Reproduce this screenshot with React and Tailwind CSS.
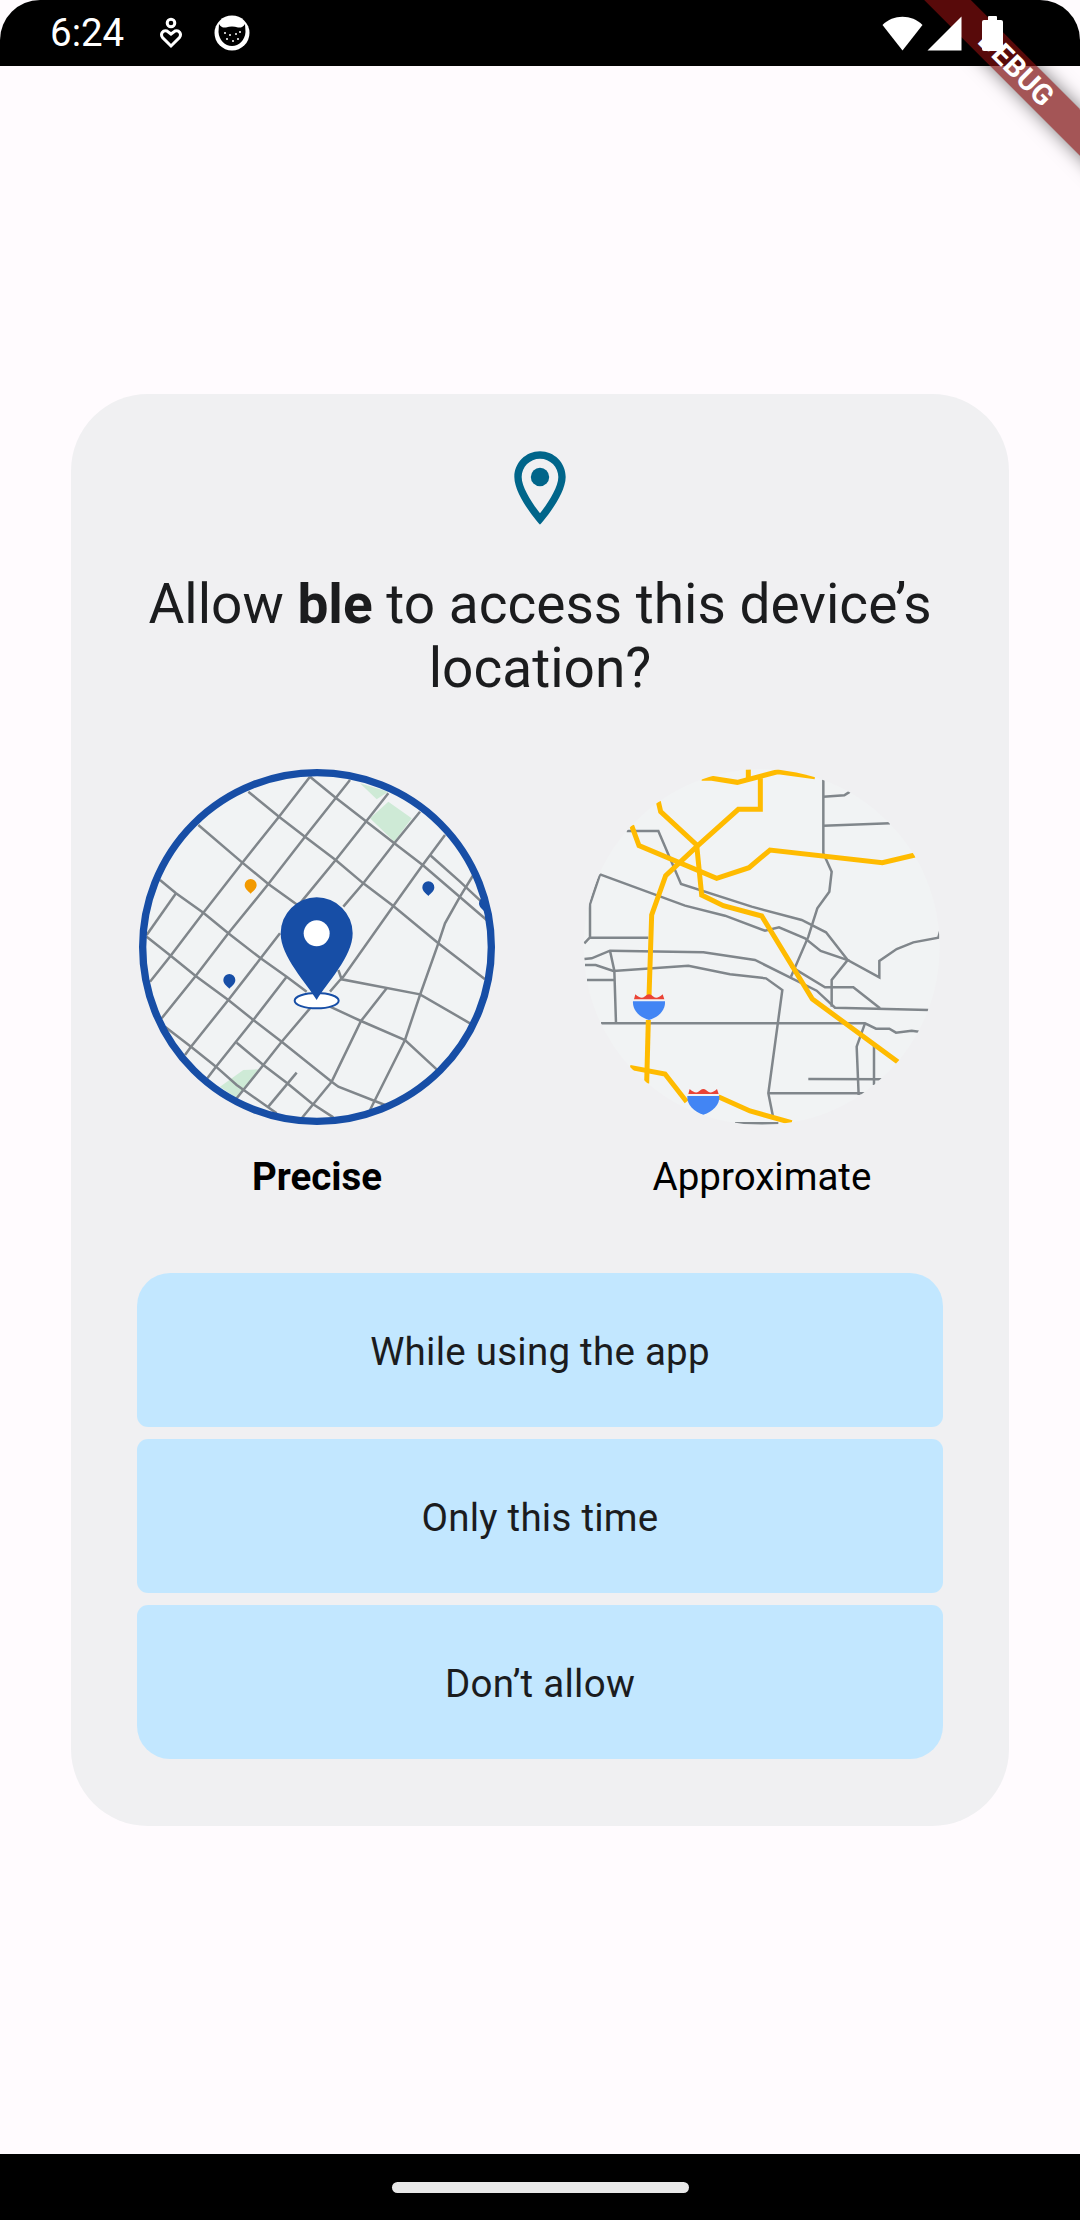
import React from "react";

function StatusBar() {
  return (
    <div className="flex h-[66px] shrink-0 items-center justify-between rounded-t-[40px] bg-black pl-[50px] pr-[77px] text-white">
      <div className="flex items-center">
        <span className="text-[38.5px] leading-[38px]">6:24</span>
        <svg className="ml-[35px] -mt-[1px]" width="24" height="32" viewBox="0 0 24 32" fill="none" stroke="#fff" strokeWidth="3">
          <circle cx="12" cy="6" r="3.8" />
          <path d="M12 29 L3.5 20.5 C1 17 4 12.5 8 14 L12 17 L16 14 C20 12.5 23 17 20.5 20.5 Z" />
        </svg>
        <svg className="ml-[31px]" width="36" height="36" viewBox="0 0 36 36">
          <circle cx="18" cy="18" r="17.5" fill="#fff" />
          <path d="M4.5 17 C5 25 11 31 18 31 C25 31 31 25 31.5 17 L31 9 C29 12 27 13 24 12.5 C20 11 16 11 12 12.5 C9 13 7 12 5 9 Z" fill="#000" />
          <g fill="#fff">
            <circle cx="11" cy="18" r="1" /><circle cx="16" cy="20" r="1" /><circle cx="22" cy="19" r="1" /><circle cx="26" cy="17" r="1" />
            <circle cx="13" cy="24" r="1" /><circle cx="19" cy="26" r="1" /><circle cx="24" cy="24" r="1" />
          </g>
        </svg>
      </div>
      <div className="relative z-20 flex items-center">
        <svg width="41" height="35" viewBox="0 0 41 35">
          <path d="M0.5 9 C11 -2 30 -2 40.5 9 L20.5 34.5 Z" fill="#fff" />
        </svg>
        <svg className="ml-[4px]" width="35" height="35" viewBox="0 0 35 35">
          <path d="M34.5 0.5 V34.5 H0.5 Z" fill="#fff" />
        </svg>
        <div className="ml-[20px] flex flex-col items-center">
          <div className="h-[4px] w-[9px] rounded-t-[1px] bg-white" />
          <div className="h-[31px] w-[21px] rounded-[2px] bg-white" />
        </div>
      </div>
    </div>
  );
}

function DebugBanner() {
  return (
    <div className="pointer-events-none absolute left-0 top-0 z-10 h-[220px] w-[1080px] overflow-hidden">
      <div className="absolute left-[866px] top-[52px] flex h-[33px] w-[300px] rotate-45 items-center justify-center bg-[rgba(125,14,14,0.7)] shadow-[0_0_18px_rgba(0,0,0,0.5)]">
        <span className="text-[29px] font-bold leading-[29px] text-white">DEBUG</span>
      </div>
    </div>
  );
}

function PreciseMap() {
  const roads = [
    "M540,50 L447,170 L337,308 L220,458 L122,587 L60,665",
    "M660,60 L525,230 L415,372 L295,520 L197,648 L95,775",
    "M775,100 L617,300 L510,430 M450,520 L392,595 L295,720 L183,860 L165,885",
    "M870,155 L793,250 L700,370 L640,440",
    "M945,225 L878,315 L790,438 L640,650 L630,660 L600,695 M625,630 L635,658 L870,703 L1020,790",
    "M540,745 L455,845 L400,915 L320,1015",
    "M470,650 L370,780 L258,920 L232,955",
    "M138,400 L50,525",
    "M500,938 L415,1040",
    "M605,965 L515,1075",
    "M1030,345 L990,410 L945,490 L925,550 L870,705 L825,840 L720,1050",
    "M770,685 L693,783 L605,965",
    "M540,50 L617,113 L793,250 L878,315 L1070,480",
    "M355,95 L447,170 L525,230 L617,300 L700,370 L790,438 L925,550 L1065,658",
    "M205,195 L337,308 L415,372 L510,440",
    "M90,360 L138,400 L220,458 L295,520 L392,595 L470,650 L530,695",
    "M50,530 L122,587 L197,648 L295,720 L370,780 L455,845 L605,965 L625,980 L765,1035",
    "M105,800 L183,860 L258,920 L320,975 L440,1060",
    "M320,848 L400,915 L470,968 L545,1030 L610,1072",
    "M600,740 L693,783 L825,840 L920,928",
    "M900,285 L990,365 L1070,440",
  ];
  const pins = [
    [362, 375, "#F29900"],
    [895, 382, "#174EA6"],
    [298, 660, "#174EA6"],
    [1065, 430, "#174EA6"],
  ];
  return (
    <svg width="370" height="370" viewBox="0 0 1110 1110" className="-ml-[9px] -mr-[5px] -mt-[7px] -mb-[7px] shrink-0">
      <defs>
        <clipPath id="pm"><circle cx="561" cy="561" r="523" /></clipPath>
      </defs>
      <circle cx="561" cy="561" r="523" fill="#F1F3F4" />
      <g clipPath="url(#pm)">
        <path d="M690,70 L775,95 L740,118 Z M720,175 L775,125 L845,175 L793,245 Z M270,980 L340,930 L385,928 L320,1015 Z" fill="#CEEAD6" />
        <g fill="none" stroke="#80868B" strokeWidth="7.5">
          {roads.map((d, i) => <path key={i} d={d} />)}
        </g>
        {pins.map(([x, y, c], i) => (
          <path key={i} d={`M${x},${y + 26} C${x - 6},${y + 19} ${x - 18},${y + 12} ${x - 18},${y} A18,18 0 1 1 ${x + 18},${y} C${x + 18},${y + 12} ${x + 6},${y + 19} ${x},${y + 26} Z`} fill={c} />
        ))}
      </g>
      <circle cx="561" cy="561" r="523" fill="none" stroke="#174EA6" strokeWidth="22" />
      <ellipse cx="560" cy="722" rx="66" ry="23" fill="#fff" stroke="#174EA6" strokeWidth="6" />
      <path d="M560,720 C530,670 452,590 452,520 A108,108 0 1 1 668,520 C668,590 590,670 560,720 Z" fill="#174EA6" />
      <circle cx="560" cy="520" r="39" fill="#fff" />
    </svg>
  );
}

function Shield({ x, y }) {
  return (
    <g transform={`translate(${x - 222} ${y - 740})`}>
      <path d="M177,718 L181,703 C190,712 200,715 206,712 C212,708 216,703 222,703 C228,703 232,708 238,712 C244,715 254,712 263,703 L268,718 Z" fill="#EA4335" />
      <path d="M174,724 H270 C272,750 250,772 222,780 C194,772 172,750 174,724 Z" fill="#4285F4" />
    </g>
  );
}

function ApproximateMap() {
  const gray = [
    "M745,58 V280 L770,335 L763,395 L727,445 L700,530 L648,650",
    "M745,110 L808,106 L825,95",
    "M745,197 L945,190",
    "M155,213 H250 L318,372 L530,440 L680,480 L753,517 L818,600 L913,652 V603 L965,567 L1015,547 L1090,533 L1095,515",
    "M75,343 L330,437 L450,467 L570,512 L612,502 L690,535 L737,573 L818,600 L770,660 V740",
    "M75,343 L45,432 V532 L28,550 M45,533 H220",
    "M28,597 L50,595 L105,572 L385,577 L540,600 L725,692 L780,743 L1060,750",
    "M30,615 H62 L115,633 L340,617 L465,643 L573,655 L622,690 L580,1000 L595,1075",
    "M105,572 L118,632 L123,790",
    "M36,660 H118",
    "M78,790 H870 L903,806 H943 L963,818 L1010,812 L1032,815",
    "M870,790 L845,860 L851,1005",
    "M897,850 V975",
    "M700,957 L920,958",
    "M580,1000 H870",
    "M648,620 L750,682 H835 L915,745",
    "M480,1090 H610",
  ];
  const yellow = [
    "M380,55 L410,55 L487,67 L610,35 L720,50",
    "M520,28 V55",
    "M556,55 V148 H490 L365,260 L272,347 L230,465 L222,710",
    "M250,125 L257,155 L365,255 L380,405 L445,437 L560,468 L712,717 L970,907",
    "M170,197 L192,257 L425,355 L522,323 L585,270 L922,308 L1020,285",
    "M220,780 L215,970",
    "M165,922 L270,942 L335,1025",
    "M430,1010 L525,1053 L650,1088",
  ];
  return (
    <svg width="370" height="370" viewBox="0 0 1110 1110" className="-ml-[9px] -mr-[5px] -mt-[7px] -mb-[7px] shrink-0">
      <defs>
        <clipPath id="am"><circle cx="560" cy="561" r="534" /></clipPath>
      </defs>
      <circle cx="560" cy="561" r="534" fill="#F1F3F4" />
      <g clipPath="url(#am)">
        <g fill="none" stroke="#80868B" strokeWidth="7.5">
          {gray.map((d, i) => <path key={i} d={d} />)}
        </g>
        <g fill="none" stroke="#FFBB00" strokeWidth="15">
          {yellow.map((d, i) => <path key={i} d={d} />)}
        </g>
        <Shield x={222} y={740} />
        <Shield x={385} y={1024} />
      </g>
    </svg>
  );
}

function ActionButton({ children, shape }) {
  return (
    <button className={`flex h-[154px] w-full items-center justify-center bg-[#C2E7FF] pt-[3px] text-[38.5px] tracking-[0.25px] text-[#1b1c1e] ${shape}`}>
      {children}
    </button>
  );
}

export default function App() {
  return (
    <div className="relative flex h-[2220px] w-[1080px] flex-col overflow-hidden bg-[#FFFBFE] font-['Roboto',sans-serif]">
      <StatusBar />
      <DebugBanner />
      <main className="flex flex-1 items-center justify-center">
        <section className="flex w-[938px] flex-col items-center rounded-[77px] bg-[#F0F0F2] px-[66px] pb-[67px] pt-[50px]">
          <svg width="88" height="88" viewBox="0 0 24 24" fill="#00658A">
            <path d="M12 2C8.13 2 5 5.13 5 9c0 5.25 7 13 7 13s7-7.75 7-13c0-3.87-3.13-7-7-7zM7 9c0-2.76 2.24-5 5-5s5 2.24 5 5c0 2.88-2.88 7.19-5 9.88C9.92 16.21 7 11.85 7 9z" />
            <circle cx="12" cy="9" r="2.5" />
          </svg>
          <h1 className="mt-[40px] w-full text-center text-[55px] font-normal leading-[64px] text-[#1b1c1e]">
            Allow <b className="font-bold">ble</b> to access this device’s location?
          </h1>
          <div className="mt-[67px] flex w-full justify-between pl-[2px] pr-[3px]">
            <div className="flex w-[356px] flex-col items-center">
              <PreciseMap />
              <span className="mt-[31px] text-[38.5px] font-bold leading-[46px] text-black">Precise</span>
            </div>
            <div className="flex w-[356px] flex-col items-center">
              <ApproximateMap />
              <span className="mt-[31px] text-[38.5px] leading-[46px] text-black">Approximate</span>
            </div>
          </div>
          <div className="mt-[73px] flex w-full flex-col gap-[12px]">
            <ActionButton shape="rounded-t-[33px] rounded-b-[11px]">While using the app</ActionButton>
            <ActionButton shape="rounded-[11px]">Only this time</ActionButton>
            <ActionButton shape="rounded-t-[11px] rounded-b-[33px]">Don’t allow</ActionButton>
          </div>
        </section>
      </main>
      <footer className="flex h-[66px] shrink-0 items-center justify-center bg-black">
        <div className="h-[11px] w-[297px] rounded-full bg-[#E8E8E8]" />
      </footer>
    </div>
  );
}
